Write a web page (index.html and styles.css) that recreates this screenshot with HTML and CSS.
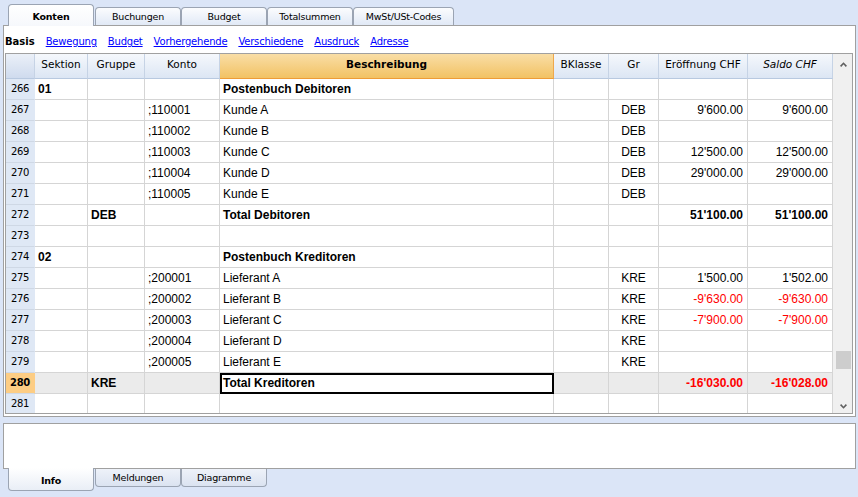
FILE: index.html
```html
<!DOCTYPE html>
<html lang="de">
<head>
<meta charset="utf-8">
<title>Konten</title>
<link rel="stylesheet" href="styles.css">
</head>
<body>
<div class="app">
  <div class="tabs tabs-top">
    <div class="tab active"><span>Konten</span></div>
    <div class="tab gap"><span>Buchungen</span></div>
    <div class="tab"><span>Budget</span></div>
    <div class="tab"><span>Totalsummen</span></div>
    <div class="tab wide"><span>MwSt/USt-Codes</span></div>
  </div>

  <div class="panel main">
    <div class="subtabs">
      <span class="cur">Basis</span>
      <a href="#">Bewegung</a>
      <a href="#">Budget</a>
      <a href="#">Vorhergehende</a>
      <a href="#">Verschiedene</a>
      <a href="#">Ausdruck</a>
      <a href="#">Adresse</a>
    </div>

    <div class="grid">
      <div class="table">
        <div class="row head">
          <div class="h corner"></div>
          <div class="h">Sektion</div>
          <div class="h">Gruppe</div>
          <div class="h">Konto</div>
          <div class="h hot">Beschreibung</div>
          <div class="h">BKlasse</div>
          <div class="h">Gr</div>
          <div class="h">Eröffnung CHF</div>
          <div class="h it">Saldo CHF</div>
        </div>

        <div class="row"><div class="c rn">266</div><div class="c b">01</div><div class="c"></div><div class="c"></div><div class="c b">Postenbuch Debitoren</div><div class="c"></div><div class="c"></div><div class="c"></div><div class="c"></div></div>
        <div class="row"><div class="c rn">267</div><div class="c"></div><div class="c"></div><div class="c">;110001</div><div class="c">Kunde A</div><div class="c"></div><div class="c ctr">DEB</div><div class="c r">9'600.00</div><div class="c r">9'600.00</div></div>
        <div class="row"><div class="c rn">268</div><div class="c"></div><div class="c"></div><div class="c">;110002</div><div class="c">Kunde B</div><div class="c"></div><div class="c ctr">DEB</div><div class="c r"></div><div class="c r"></div></div>
        <div class="row"><div class="c rn">269</div><div class="c"></div><div class="c"></div><div class="c">;110003</div><div class="c">Kunde C</div><div class="c"></div><div class="c ctr">DEB</div><div class="c r">12'500.00</div><div class="c r">12'500.00</div></div>
        <div class="row"><div class="c rn">270</div><div class="c"></div><div class="c"></div><div class="c">;110004</div><div class="c">Kunde D</div><div class="c"></div><div class="c ctr">DEB</div><div class="c r">29'000.00</div><div class="c r">29'000.00</div></div>
        <div class="row"><div class="c rn">271</div><div class="c"></div><div class="c"></div><div class="c">;110005</div><div class="c">Kunde E</div><div class="c"></div><div class="c ctr">DEB</div><div class="c r"></div><div class="c r"></div></div>
        <div class="row"><div class="c rn">272</div><div class="c"></div><div class="c b">DEB</div><div class="c"></div><div class="c b">Total Debitoren</div><div class="c"></div><div class="c"></div><div class="c r b">51'100.00</div><div class="c r b">51'100.00</div></div>
        <div class="row"><div class="c rn">273</div><div class="c"></div><div class="c"></div><div class="c"></div><div class="c"></div><div class="c"></div><div class="c"></div><div class="c"></div><div class="c"></div></div>
        <div class="row"><div class="c rn">274</div><div class="c b">02</div><div class="c"></div><div class="c"></div><div class="c b">Postenbuch Kreditoren</div><div class="c"></div><div class="c"></div><div class="c"></div><div class="c"></div></div>
        <div class="row"><div class="c rn">275</div><div class="c"></div><div class="c"></div><div class="c">;200001</div><div class="c">Lieferant A</div><div class="c"></div><div class="c ctr">KRE</div><div class="c r">1'500.00</div><div class="c r">1'502.00</div></div>
        <div class="row"><div class="c rn">276</div><div class="c"></div><div class="c"></div><div class="c">;200002</div><div class="c">Lieferant B</div><div class="c"></div><div class="c ctr">KRE</div><div class="c r neg">-9'630.00</div><div class="c r neg">-9'630.00</div></div>
        <div class="row"><div class="c rn">277</div><div class="c"></div><div class="c"></div><div class="c">;200003</div><div class="c">Lieferant C</div><div class="c"></div><div class="c ctr">KRE</div><div class="c r neg">-7'900.00</div><div class="c r neg">-7'900.00</div></div>
        <div class="row"><div class="c rn">278</div><div class="c"></div><div class="c"></div><div class="c">;200004</div><div class="c">Lieferant D</div><div class="c"></div><div class="c ctr">KRE</div><div class="c r"></div><div class="c r"></div></div>
        <div class="row"><div class="c rn">279</div><div class="c"></div><div class="c"></div><div class="c">;200005</div><div class="c">Lieferant E</div><div class="c"></div><div class="c ctr">KRE</div><div class="c r"></div><div class="c r"></div></div>
        <div class="row sel"><div class="c rn">280</div><div class="c"></div><div class="c b">KRE</div><div class="c"></div><div class="c b focus">Total Kreditoren</div><div class="c"></div><div class="c"></div><div class="c r b neg">-16'030.00</div><div class="c r b neg">-16'028.00</div></div>
        <div class="row"><div class="c rn">281</div><div class="c"></div><div class="c"></div><div class="c"></div><div class="c"></div><div class="c"></div><div class="c"></div><div class="c"></div><div class="c"></div></div>
      </div>

      <div class="vscroll">
        <svg class="arrow up" width="7" height="5" viewBox="0 0 7 5"><polyline points="0.6,4.4 3.5,1.3 6.4,4.4" fill="none" stroke="#5f5f5f" stroke-width="1.6"/></svg>
        <div class="thumb"></div>
        <svg class="arrow down" width="7" height="5" viewBox="0 0 7 5"><polyline points="0.6,0.6 3.5,3.7 6.4,0.6" fill="none" stroke="#5f5f5f" stroke-width="1.6"/></svg>
      </div>
    </div>
  </div>

  <div class="panel info"></div>

  <div class="tabs tabs-bottom">
    <div class="tab active"><span>Info</span></div>
    <div class="tab gap"><span>Meldungen</span></div>
    <div class="tab"><span>Diagramme</span></div>
  </div>
</div>
</body>
</html>
```

FILE: styles.css
```css
* { box-sizing: border-box; }

html, body {
  margin: 0;
  padding: 0;
  background: #dbe5f7;
}

body {
  font-family: "DejaVu Sans", Verdana, sans-serif;
  color: #000;
}

.app {
  width: 858px;
  height: 497px;
  padding-left: 3px;
}

/* ---------- tabs ---------- */
.tabs {
  display: flex;
  padding-left: 5px;
}

.tabs-top {
  height: 25px;
  align-items: flex-end;
}

.tabs-bottom {
  align-items: flex-start;
}

.tab {
  width: 86px;
  font-size: 9.5px;
  letter-spacing: -0.2px;
  line-height: 12px;
  text-align: center;
  border: 1px solid #9ba4b3;
  color: #000;
}

.tab.gap { margin-left: 1px; }
.tab.wide { width: 101px; }

.tabs-top .tab {
  height: 18px;
  border-bottom: none;
  border-radius: 4px 4px 0 0;
  padding-top: 3px;
  background: linear-gradient(#fbfcfe, #e1e9f6);
}

.tabs-top .tab.active {
  height: 22px;
  margin-bottom: -1px;
  padding-top: 6px;
  font-weight: bold;
  background: linear-gradient(#ffffff, #f6f8fc);
  position: relative;
  z-index: 1;
}

.tabs-bottom .tab {
  height: 18px;
  border-top: none;
  border-radius: 0 0 4px 4px;
  padding-top: 3px;
  background: linear-gradient(#eef2f9, #dbe3f1);
}

.tabs-bottom .tab.active {
  height: 23px;
  margin-top: -1px;
  padding-top: 7px;
  font-weight: bold;
  background: linear-gradient(#ffffff, #e9eef6);
  position: relative;
  z-index: 1;
}

/* ---------- panels ---------- */
.panel {
  width: 853px;
  background: #fff;
  border: 1px solid #a0a0a0;
}

.main {
  height: 392px;
  padding: 0 1px 2px 1px;
}

.info {
  height: 46px;
  margin-top: 6px;
}

/* ---------- sub tabs ---------- */
.subtabs {
  height: 27px;
  display: flex;
  align-items: flex-end;
  gap: 11px;
  padding-bottom: 5px;
  font-size: 10px;
  line-height: 12px;
  letter-spacing: -0.2px;
}

.subtabs .cur { font-weight: bold; letter-spacing: 0; }
.subtabs a { color: #0000ff; text-decoration: underline; }

/* ---------- grid ---------- */
.grid {
  display: flex;
  height: 361px;
  width: 848px;
  border: 1px solid #a0a0a0;
  overflow: hidden;
}

.table {
  width: 827px;
  overflow: hidden;
}

.row {
  display: grid;
  grid-template-columns: 29px 53px 57px 75px 334px 55px 50px 89px 85px;
  height: 21px;
  font-family: "Liberation Sans", Arial, sans-serif;
  font-size: 12px;
}

.row.head {
  height: 25px;
  font-family: "DejaVu Sans", Verdana, sans-serif;
  font-size: 10.5px;
}

.h {
  text-align: center;
  padding-top: 4px;
  line-height: 13px;
  white-space: nowrap;
  background: linear-gradient(#f5f8fc, #dce6f4);
  border-right: 1px solid #c6d3e5;
  border-bottom: 1px solid #b8c9e0;
}

.h.corner { background: linear-gradient(#ebf0f8, #cfdbee); }
.h.hot {
  font-weight: bold;
  background: linear-gradient(#f9dea6, #f2c264);
  border-right-color: #eea84d;
  border-bottom-color: #ee9c37;
}
.h.it { font-style: italic; }

.c {
  padding: 0 3px;
  line-height: 20px;
  white-space: nowrap;
  overflow: hidden;
  border-right: 1px solid #d5d5d5;
  border-bottom: 1px solid #d5d5d5;
  background: #fff;
}

.c.rn {
  font-family: "DejaVu Sans", Verdana, sans-serif;
  font-size: 10px;
  letter-spacing: -0.3px;
  text-align: center;
  padding: 0;
  background: #dfe8f5;
  border-right-color: #dfe8f5;
  border-bottom-color: #cfd8e5;
}

.c.b { font-weight: bold; }
.c.r { text-align: right; padding-right: 4px; }
.c.ctr { text-align: center; }
.c.neg { color: #ff0000; }

.row.sel .c { background: #ebebeb; }
.row.sel .c.rn { background: #fdcd84; font-weight: bold; border-right-color: #fdcd84; }
.row.sel .c.focus {
  background: #fff;
  outline: 2px solid #000;
  outline-offset: -2px;
}

/* ---------- scrollbar ---------- */
.vscroll {
  width: 19px;
  background: #f0f0f0;
  display: flex;
  flex-direction: column;
  align-items: flex-start;
  padding-left: 7px;
}

.arrow { display: block; }
.arrow.up { margin-top: 8px; }

.thumb {
  width: 15px;
  height: 18px;
  margin-left: -4px;
  margin-top: 284px;
  background: #cdcdcd;
}

.arrow.down {
  margin-top: auto;
  margin-bottom: 4px;
}
```
